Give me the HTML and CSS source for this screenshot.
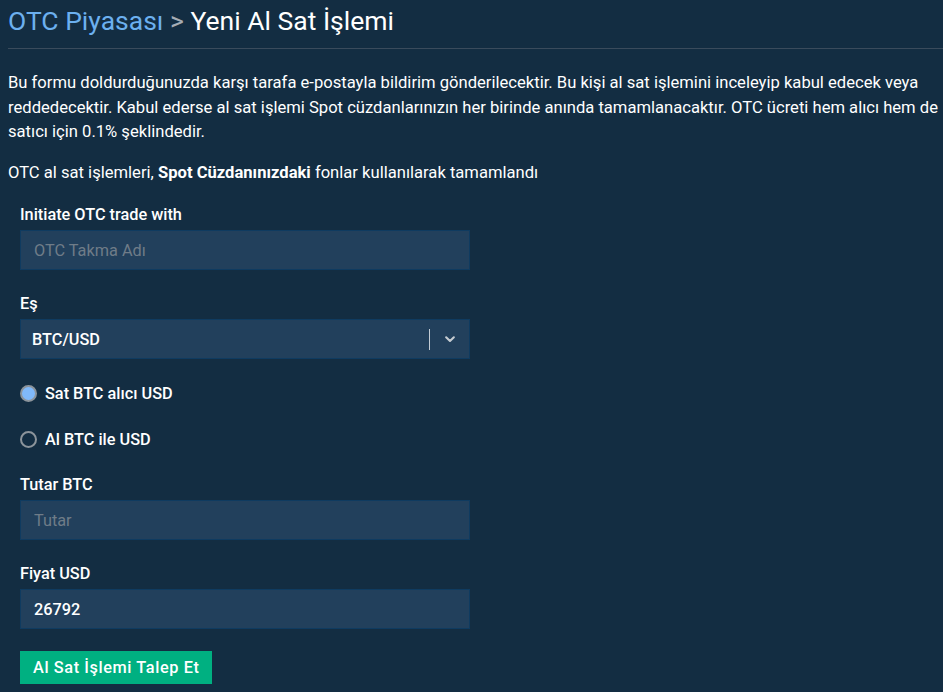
FILE: index.html
```html
<!DOCTYPE html>
<html lang="tr">
<head>
  <meta charset="UTF-8">
  <title>OTC Piyasası - Yeni Al Sat İşlemi</title>
  <link rel="stylesheet" href="styles.css">
</head>
<body>
  <div class="otc-page">
    <h1 class="otc-title">
      <span class="crumb">OTC Piyasası</span><span class="sep"> &gt; </span><span class="current">Yeni Al Sat İşlemi</span>
    </h1>

    <p class="otc-intro">Bu formu doldurduğunuzda karşı tarafa e-postayla bildirim gönderilecektir. Bu kişi al sat işlemini inceleyip kabul edecek veya reddedecektir. Kabul ederse al sat işlemi Spot cüzdanlarınızın her birinde anında tamamlanacaktır. OTC ücreti hem alıcı hem de satıcı için 0.1% şeklindedir.</p>

    <p class="otc-note">OTC al sat işlemleri, <strong>Spot Cüzdanınızdaki</strong> fonlar kullanılarak tamamlandı</p>

    <form class="otc-form">
      <div class="otc-group">
        <label class="otc-label">Initiate OTC trade with</label>
        <input class="otc-input" type="text" placeholder="OTC Takma Adı">
      </div>

      <div class="otc-group">
        <label class="otc-label">Eş</label>
        <div class="otc-select">
          <span class="otc-select-value">BTC/USD</span>
          <span class="otc-select-divider"></span>
          <span class="otc-select-arrow">
            <svg width="14" height="14" viewBox="0 0 20 20"><path d="M4.5 7.5 L10 12.8 L15.5 7.5" fill="none" stroke="#c6ccd2" stroke-width="3" stroke-linecap="round" stroke-linejoin="round"/></svg>
          </span>
        </div>
      </div>

      <label class="otc-radio">
        <input type="radio" name="side" checked>
        <span class="dot"></span>
        <span>Sat BTC alıcı USD</span>
      </label>

      <label class="otc-radio">
        <input type="radio" name="side">
        <span class="dot"></span>
        <span>Al BTC ile USD</span>
      </label>

      <div class="otc-group">
        <label class="otc-label">Tutar BTC</label>
        <input class="otc-input" type="text" placeholder="Tutar">
      </div>

      <div class="otc-group">
        <label class="otc-label">Fiyat USD</label>
        <input class="otc-input" type="text" value="26792">
      </div>

      <button class="otc-button" type="button">Al Sat İşlemi Talep Et</button>
    </form>
  </div>
</body>
</html>
```

FILE: styles.css
```css
html, body {
  margin: 0;
  padding: 0;
  width: 100%;
  height: 100%;
  overflow: hidden;
}

body {
  background-color: #132d42;
  font-family: Roboto, "Liberation Sans", sans-serif;
  color: #ffffff;
}

.otc-page {
  padding: 0 0 0 8px;
}

.otc-title {
  margin: 0;
  padding: 3px 0 0;
  height: 45px;
  font-size: 26.5px;
  font-weight: 400;
  line-height: 36px;
  border-bottom: 1px solid #3a4b5c;
}

.otc-title .crumb {
  color: #6cb0ef;
}

.otc-title .sep {
  color: #a6adb5;
}

.otc-title .current {
  color: #ffffff;
}

.otc-intro,
.otc-note {
  margin: 22px 0 0;
  font-size: 16.6px;
  line-height: 24.5px;
}

.otc-note {
  margin-top: 16px;
}

.otc-note strong {
  font-weight: 700;
}

.otc-form {
  margin: 18px 0 0 12px;
  width: 450px;
}

.otc-group {
  margin-bottom: 22px;
}

.otc-label {
  display: block;
  font-size: 16.3px;
  font-weight: 500;
  line-height: 24px;
  margin-bottom: 3px;
}

.otc-input,
.otc-select {
  display: flex;
  align-items: center;
  width: 100%;
  height: 40px;
  box-sizing: border-box;
  background-color: #22405c;
  border: 1px solid #0f3b60;
  font-family: inherit;
  font-size: 16.3px;
  font-weight: 500;
  color: #ffffff;
  outline: none;
}

.otc-input {
  padding: 0 13px;
}

.otc-input::placeholder {
  color: #6f7c88;
  font-weight: 400;
}

.otc-select {
  padding: 0 0 0 11px;
}

.otc-select-value {
  flex: 1;
}

.otc-select-divider {
  width: 1px;
  height: 21px;
  background-color: #c3ccd5;
}

.otc-select-arrow {
  display: flex;
  align-items: center;
  justify-content: center;
  width: 39px;
}

.otc-radio {
  display: flex;
  align-items: center;
  height: 24px;
  margin-bottom: 22px;
  font-size: 16.3px;
  font-weight: 500;
  cursor: pointer;
}

.otc-radio input {
  display: none;
}

.otc-radio .dot {
  width: 17px;
  height: 17px;
  box-sizing: border-box;
  border-radius: 50%;
  border: 2px solid #8c949b;
  margin-right: 8px;
}

.otc-radio input:checked + .dot {
  background-color: #80b9fa;
}

.otc-button {
  display: block;
  height: 33px;
  margin-top: 2px;
  padding: 0 13px;
  border: none;
  background-color: #00b081;
  color: #ffffff;
  font-family: inherit;
  font-size: 16.3px;
  font-weight: 500;
  letter-spacing: 0.6px;
  cursor: pointer;
}
```
